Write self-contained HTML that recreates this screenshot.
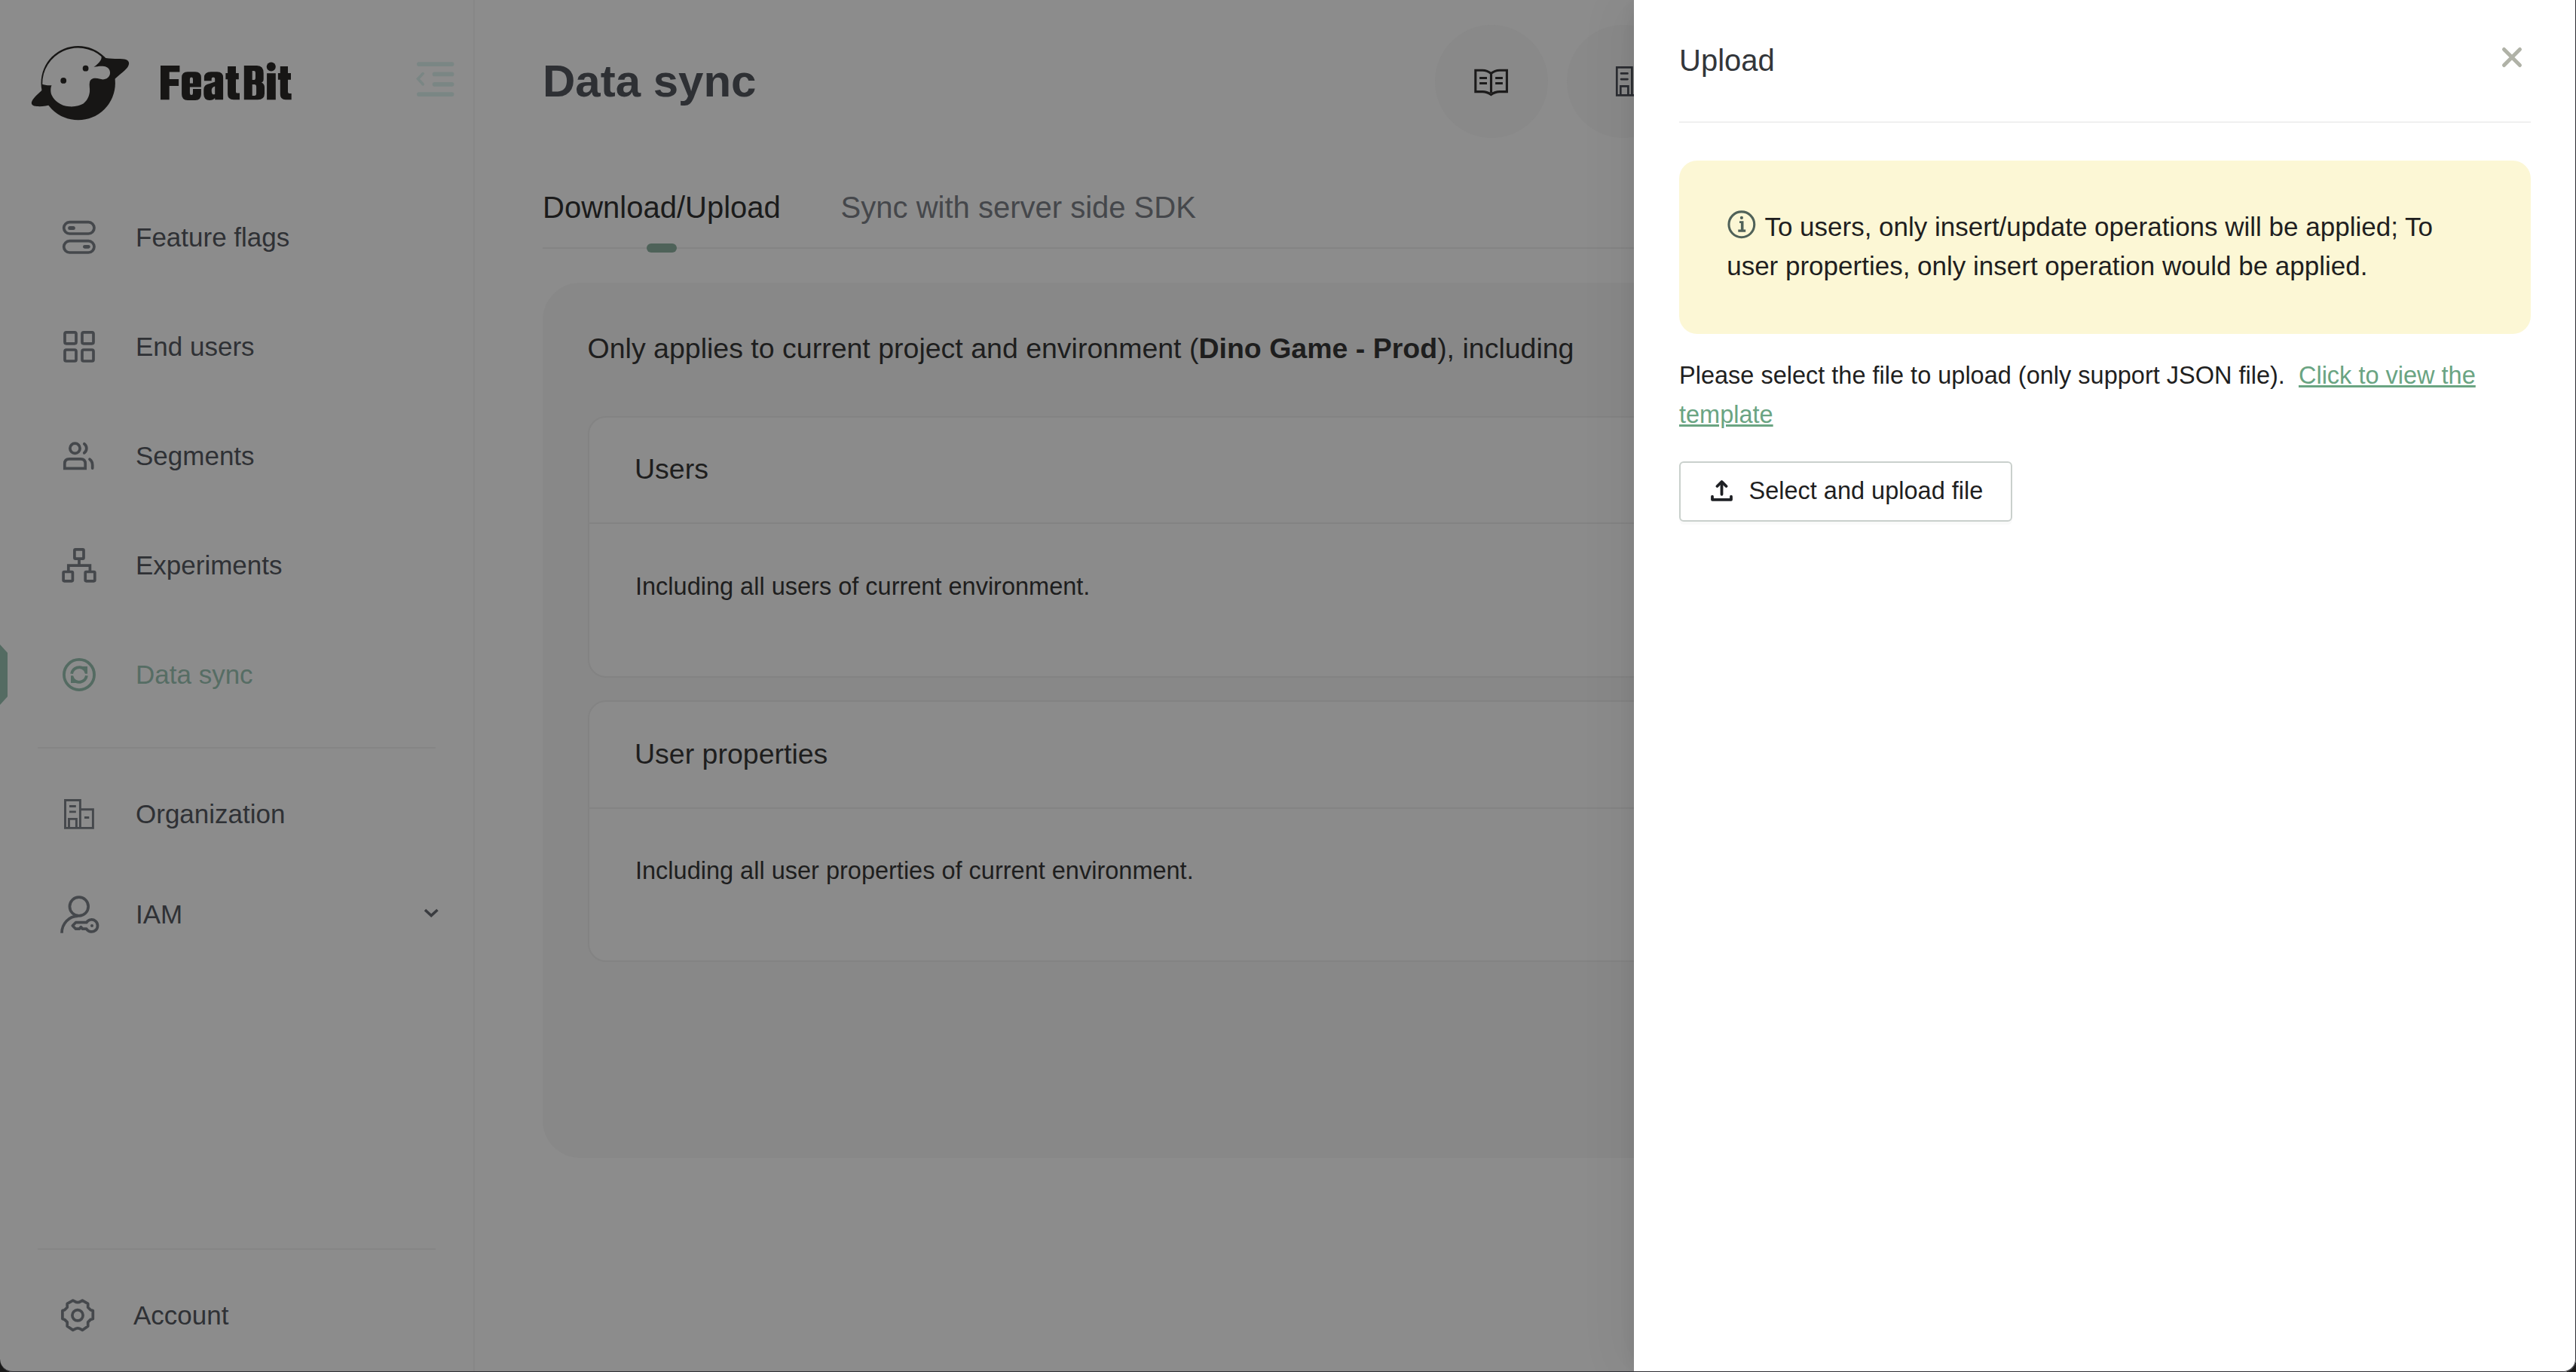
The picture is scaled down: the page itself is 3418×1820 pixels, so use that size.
<!DOCTYPE html>
<html><head><meta charset="utf-8">
<style>
*{box-sizing:border-box;margin:0;padding:0}
html,body{width:3418px;height:1820px;overflow:hidden;background:#1a1a1a}
body{font-family:"Liberation Sans",sans-serif;}
#app{position:absolute;left:0;top:0;width:3418px;height:1820px;background:#8c8c8c;overflow:hidden;border-radius:0 0 17px 17px;}
#frame{position:absolute;left:0;top:0;width:3418px;height:1820px;border-right:1px solid #2e2f34;border-bottom:1px solid #2e2f34;border-radius:0 0 17px 17px;pointer-events:none}
.abs{position:absolute}
.t{position:absolute;white-space:nowrap;line-height:1}
.nav{font-size:35px;color:#2f3135;left:180px}
.sep{position:absolute;left:50px;width:528px;height:2px;background:#858585}
svg{position:absolute;overflow:visible}
</style></head><body>
<div id="app">
  <!-- sidebar -->
<svg style="left:0;top:0" width="630" height="1820" viewBox="0 0 630 1820">
  <!-- active indicator -->
  <path d="M0 855 L10 866 V924 L0 935 Z" fill="#546b62"/>
  <g fill="none" stroke="#45484c" stroke-width="3.7">
    <!-- feature flags -->
    <rect x="84.7" y="294.7" width="40.3" height="15.3" rx="7.65"/>
    <rect x="84.7" y="319.7" width="40.3" height="15.3" rx="7.65"/>
    <!-- end users -->
    <rect x="86" y="440.8" width="15" height="15" rx="2"/>
    <rect x="109" y="440.8" width="15" height="15" rx="2"/>
    <rect x="86" y="464" width="15" height="15" rx="2"/>
    <rect x="109" y="464" width="15" height="15" rx="2"/>
    <!-- segments -->
    <circle cx="99.5" cy="594.8" r="6.6"/>
    <path d="M85.8 621.3 V615 Q85.8 608.8 92 608.8 H107 Q113.2 608.8 113.2 615 V621.3 Z"/>
    <path d="M111.8 588.8 A7.5 7.5 0 0 1 111.8 600.8" stroke-linecap="round"/>
    <path d="M119 609.2 Q122.7 612 122.7 617 V621.1" stroke-linecap="round"/>
    <!-- experiments -->
    <rect x="98.9" y="728.9" width="12.1" height="12.2" rx="1.2"/>
    <rect x="84.1" y="758.5" width="12.3" height="12.3" rx="1.2"/>
    <rect x="113.2" y="758.5" width="12.6" height="12.3" rx="1.2"/>
    <path d="M105 743 V750.1 M90.8 758 V750.1 H119.4 V758"/>
    <!-- organization -->
    <g stroke-width="2.9">
    <path d="M86.5 1098.4 V1061.5 H106.4 V1098.4 Z M106.4 1073.7 H123.4 V1098.4 H106.4 M91.5 1098.4 V1086.4 H101.4 V1098.4 M92 1069.5 H100.8 M92 1076.9 H100.8 M112 1084.5 H118.3"/>
    </g>
    <!-- IAM -->
    <circle cx="104.8" cy="1202.5" r="12.35"/>
    <path d="M82 1237.7 A21.5 22.5 0 0 1 103.5 1215.2"/>
    <path d="M114.75 1223.7 H100.5 L96.3 1228 L100.5 1232.2 H105.2 L107.4 1229.6 L109.6 1232.2 H114.75 A8 8 0 1 0 114.75 1223.7 Z" stroke-linejoin="round"/>
    <!-- chevron -->
    <path d="M564 1207 L572.2 1214.5 L580.5 1207" stroke="#3a3c40" stroke-width="3.6"/>
    <!-- gear -->
    <path d="M82.9 1738.6 L85.7 1737.7 L89.2 1734.2 L89.2 1729.4 L96.8 1725.1 L99.2 1726.4 Q103.2 1729 107.1 1726.4 L109.3 1725.1 L116.7 1729.4 L116.7 1734.2 L120.2 1737.7 L123.3 1738.6 L123.3 1749.5 L120.2 1750.4 L116.7 1753.9 L116.7 1759.2 L109.3 1764.4 L107.1 1763.1 Q103.2 1760.5 99.2 1763.1 L96.8 1764.4 L89.2 1759.2 L89.2 1753.9 L85.7 1750.4 L82.9 1749.5 Z" stroke-linejoin="round"/>
    <circle cx="103" cy="1744.8" r="7.1"/>
  </g>
  <g fill="#45484c">
    <rect x="90.2" y="299.9" width="9.6" height="5.1" rx="2.5"/>
    <rect x="110" y="324.9" width="9.7" height="4.8" rx="2.4"/>
    <circle cx="122" cy="1228" r="2"/>
  </g>
  <!-- data sync icon -->
  <g fill="none" stroke="#546b62" stroke-width="3.8">
    <circle cx="105" cy="895" r="20.05"/>
    <path d="M95.1 893.8 A10.1 10.1 0 0 1 112.5 888.5"/>
    <path d="M114.9 896.2 A10.1 10.1 0 0 1 97.5 901.5"/>
  </g>
  <g fill="#546b62">
    <path d="M108.5 884 H116 V893.8 H113 Z"/>
    <path d="M94 896.2 H97 L101.5 906 H94 Z"/>
  </g>
  <!-- collapse icon -->
  <g stroke="#7a8684" stroke-width="5.7" stroke-linecap="round" fill="none">
    <path d="M555.9 85.05 H599.6 M576.6 98.45 H599.6 M576.6 111.85 H599.6 M555.9 125.1 H599.6"/>
    <path d="M561.2 97.6 L554.6 104.6 L561.2 111.8" stroke-width="3.6"/>
  </g>
  <!-- logo -->
  <g transform="translate(30 50)">
    <circle cx="73.7" cy="60.1" r="49.2" fill="#171615"/>
    <path d="M106 26 C118 29 128 27.5 135 28.5 C141 29.5 142.5 33.5 140 38 C137 43 130 48 122 55 L112 48 Z" fill="#171615"/>
    <path d="M32 64 C22 73 15 79 12.5 84 C10.5 88 13 91 19 91 C25 91.5 32 90.5 40 88.5 L44 78 Z" fill="#171615"/>
    <path d="M26.2 61.7 C28 62.5 33 63.5 38.5 63.2 C37 66 36.8 72 38.5 76.1 C40.5 81 44 84 47 86 C51 89 56 91 62 91.3 C70 91.8 76 90 80.5 87.5 C85 84 88 79 89 72 C89.6 67 88 63 89 59 C90 55 93 53.6 97 53.8 C101 54 104 55.8 108 55.3 C113 54.5 116 51 116 46.5 C116 42 113 38.6 108 38 C103 37.4 98 38.5 94.5 38.8 C98 36.5 101.5 33.5 103.5 30 C104.5 28 104.8 26.5 104.5 24.9 A47.5 47.5 0 0 0 26.2 61.7 Z" fill="#8c8c8c"/>
    <circle cx="83.6" cy="40.7" r="3.9" fill="#171615"/>
    <circle cx="54.2" cy="56.9" r="3.9" fill="#171615"/>
  </g>
  <!-- wordmark -->
  <g transform="translate(200 70)" fill="#171615" fill-rule="evenodd">
    <path d="M13 17 H38.4 V25.6 H24.7 V34.9 H37.1 V43.9 H24.7 V62.3 H13 Z"/>
    <path d="M49 25.2 H59 Q66.9 25.2 66.9 33 V45.4 H51.9 V53.5 Q51.9 56 54 56 Q56 56 56 53.5 V48 H66.9 V55 Q66.9 62.9 59 62.9 H49 Q41.1 62.9 41.1 55 V33 Q41.1 25.2 49 25.2 Z M51.9 40.4 V35 Q51.9 32.6 54 32.6 Q56 32.6 56 35 V40.4 Z"/>
    <path d="M70.9 37.3 V33 Q70.9 25.2 80 25.2 H88 Q96.1 25.2 96.1 33 V62.3 H85.2 V60 Q83 62.9 78 62.9 Q70.3 62.9 70.3 55 V49 Q70.3 42 78 41 L85.2 38.5 V34.5 Q85.2 32.6 83 32.6 Q80.7 32.6 80.7 34.5 V37.3 Z M85.2 44.6 V55.1 Q83 55.5 82 55 Q80.7 54 80.7 50 Q80.7 46 85.2 44.6 Z"/>
    <path d="M102.1 18 H113 V27 H116.8 V35.3 H113 V52 Q113 53.6 115 53.6 H118 V62.3 H110 Q102.1 62.3 102.1 55 V35.3 H99.4 V27 H102.1 Z"/>
    <path d="M123.8 16.9 H141 Q149.7 16.9 149.7 27 V35 Q149.7 38.5 147 39.5 Q151 41 151 46 V54 Q151 62.3 142 62.3 H123.8 Z M134.7 24 H137 Q139 24 139 27 V33 Q139 36.1 137 36.1 H134.7 Z M134.7 41.9 H137.5 Q140.1 41.9 140.1 45 V54 Q140.1 57 137.5 57 H134.7 Z"/>
    <circle cx="159.8" cy="18.6" r="6"/>
    <rect x="154.1" y="27.2" width="11.7" height="35.1"/>
    <path d="M171.8 18 H182 V27 H186 V35.8 H182 V52 Q182 54 184 54 H186.7 V62.3 H179 Q171.8 62.3 171.8 55 V35.8 H168.9 V27 H171.8 Z"/>
  </g>
</svg>
  <div class="abs" style="left:628px;top:0;width:2px;height:1820px;background:#878787"></div>

  <div class="t nav" style="top:297.4px">Feature flags</div>
  <div class="t nav" style="top:442.4px">End users</div>
  <div class="t nav" style="top:587.4px">Segments</div>
  <div class="t nav" style="top:732.4px">Experiments</div>
  <div class="t nav" style="top:877.4px;color:#566d64">Data sync</div>
  <div class="sep" style="top:991px"></div>
  <div class="t nav" style="top:1061.8px">Organization</div>
  <div class="t nav" style="top:1195.2px">IAM</div>
  <div class="sep" style="top:1655.5px"></div>
  <div class="t nav" style="top:1727.4px;left:177px">Account</div>

  <!-- main -->
  <div class="t" style="left:720px;top:77.6px;font-size:60px;font-weight:bold;color:#2e3034">Data sync</div>
  <div class="abs" style="left:1904px;top:33px;width:150px;height:150px;border-radius:50%;background:#898989"></div>
  <div class="abs" style="left:2079px;top:33px;width:150px;height:150px;border-radius:50%;background:#898989"></div>

<svg style="left:1900px;top:80px" width="270" height="60" viewBox="1900 80 270 60">
    <g fill="none" stroke="#1c1b1b" stroke-width="3.1">
      <path d="M1978.4 97.5 C1975 94.5 1972 93.2 1967 93.2 H1957.8 V121.6 H1967 C1972 121.6 1975 123 1978.4 125.5 C1981.8 123 1984.8 121.6 1989.8 121.6 H1999.4 V93.2 H1989.8 C1984.8 93.2 1981.8 94.5 1978.4 97.5 Z M1978.5 97.5 V123"/>
      <path d="M1963.1 103.5 H1973 M1963.1 110.5 H1973 M1984.1 103.5 H1993.9 M1984.1 110.5 H1993.9" stroke-width="2.9"/>
    </g>
    <g fill="none" stroke="#2a2c31" stroke-width="2.7">
      <path d="M2145.3 126.4 V89.3 H2165.4 V126.4 Z M2150.3 126.4 V114.4 H2160.4 V126.4 M2151 97.4 H2159.5 M2151 105.1 H2159.5 M2165.4 126.4 H2170" stroke-linecap="round"/>
    </g>
  </svg>
  <div class="t" style="left:720px;top:255px;font-size:40px;color:#1b1b1b">Download/Upload</div>
  <div class="t" style="left:1115.6px;top:255px;font-size:40px;color:#45474b">Sync with server side SDK</div>
  <div class="abs" style="left:720px;top:327.5px;width:1500px;height:2px;background:#848484"></div>
  <div class="abs" style="left:858px;top:323px;width:40px;height:12px;border-radius:6px;background:#4e6259"></div>

  <div class="abs" style="left:720px;top:375px;width:1600px;height:1160.6px;border-radius:50px;background:#888888"></div>
  <div class="t" style="left:779.6px;top:444.1px;font-size:37.5px;color:#1e1e1e">Only applies to current project and environment (<b>Dino Game - Prod</b>), including</div>

  <div class="abs" style="left:780px;top:552px;width:1500px;height:346.5px;border-radius:24px;border:2px solid #838383;background:#8b8b8b"></div>
  <div class="abs" style="left:782px;top:692.5px;width:1500px;height:2px;background:#838383"></div>
  <div class="t" style="left:842px;top:603.7px;font-size:37.5px;color:#1e1e1e">Users</div>
  <div class="t" style="left:843px;top:762.3px;font-size:32.5px;color:#1e1e1e">Including all users of current environment.</div>

  <div class="abs" style="left:780px;top:929px;width:1500px;height:346.5px;border-radius:24px;border:2px solid #838383;background:#8b8b8b"></div>
  <div class="abs" style="left:782px;top:1071px;width:1500px;height:2px;background:#838383"></div>
  <div class="t" style="left:842px;top:981.9px;font-size:37.5px;color:#1e1e1e">User properties</div>
  <div class="t" style="left:843px;top:1139.2px;font-size:32.5px;color:#1e1e1e">Including all user properties of current environment.</div>

  <!-- drawer -->
  <div class="abs" id="drawer" style="left:2168px;top:0;width:1250px;height:1820px;background:#fff;box-shadow:-8px 0 20px -10px rgba(0,0,0,.10),-20px 0 60px 0 rgba(0,0,0,.045)">
    <div class="t" style="left:60px;top:59.9px;font-size:40px;color:#33363a">Upload</div>
<svg style="left:1140px;top:50px" width="60" height="60" viewBox="3308 50 60 60">
      <path d="M3322.5 65.5 L3343.5 86.5 M3343.5 65.5 L3322.5 86.5" stroke="#b0b2a7" stroke-width="5" stroke-linecap="round"/>
    </svg>
    <div class="abs" style="left:60px;top:160.5px;width:1130px;height:2px;background:#f0f0f0"></div>
    <div class="abs" style="left:60px;top:213px;width:1130px;height:230px;border-radius:24px;background:#fcf7d5"></div>
<svg style="left:110px;top:270px" width="50" height="50" viewBox="2278 270 50 50">
      <circle cx="2310.85" cy="297.8" r="16.9" fill="none" stroke="#506259" stroke-width="3.1"/>
      <circle cx="2310.9" cy="288.9" r="2.1" fill="#506259"/>
      <path d="M2308 293.2 H2313.5 V304.5 H2316.2 V307.8 H2306.3 V304.5 H2309.9 V296 H2308 Z" fill="#506259"/>
    </svg>
    <div class="abs" style="left:123.2px;top:274.7px;width:1004px;font-size:35px;line-height:52.5px;color:#1f1f1f">
      <span style="display:inline-block;width:37px;height:20px;margin-right:13.2px"></span>To users, only insert/update operations will be applied; To user properties, only insert operation would be applied.
    </div>
    <div class="abs" style="left:60px;top:472px;width:1130px;font-size:32.5px;line-height:52px;color:#1f1f1f">Please select the file to upload (only support JSON file). &nbsp;<span style="color:#6aa482;text-decoration:underline">Click to view the template</span></div>
    <div class="abs" style="left:60px;top:612px;width:441.5px;height:80px;border:2px solid #c9d0cc;border-radius:6px;background:#fff;box-shadow:0 4px 0 rgba(0,0,0,.02)"></div>
<svg style="left:92px;top:620px" width="50" height="60" viewBox="2260 620 50 60">
      <g fill="none" stroke="#1e2024" stroke-width="3.8" stroke-linecap="round" stroke-linejoin="round">
        <path d="M2278.5 645 L2284.5 639 L2290.5 645"/>
        <path d="M2284.5 640 V655.8"/>
        <path d="M2272 658.7 V662.8 H2297 V658.7"/>
      </g>
    </svg>
    <div class="t" style="left:152.5px;top:635.4px;font-size:32.5px;color:#1f1f1f">Select and upload file</div>
  </div>
</div>
<div id="frame"></div>
</body></html>
